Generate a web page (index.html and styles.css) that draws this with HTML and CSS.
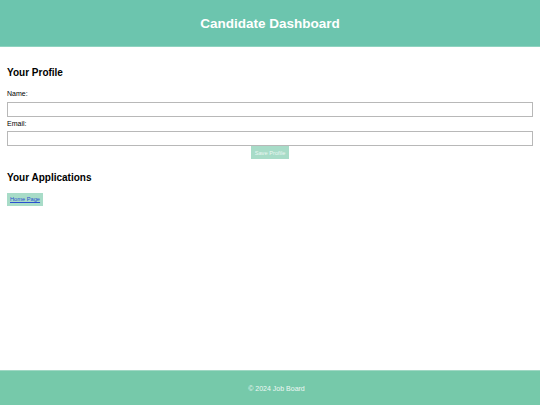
FILE: index.html
```html
<!DOCTYPE html>
<html>
<head>
<meta charset="utf-8">
<link rel="stylesheet" href="styles.css">
</head>
<body>
<header class="top">
  <h1 class="title">Candidate Dashboard</h1>
</header>
<main class="content">
  <section class="profile">
    <h2 class="section-title">Your Profile</h2>
    <form class="form">
      <label class="label">Name:</label>
      <input class="field" type="text">
      <label class="label">Email:</label>
      <input class="field" type="email">
      <button class="save" type="button">Save Profile</button>
    </form>
  </section>
  <section class="apps">
    <h2 class="section-title">Your Applications</h2>
    <div class="links">
      <a class="home" href="#">Home Page</a>
    </div>
  </section>
</main>
<footer class="bottom">
  <p class="copy">© 2024 Job Board</p>
</footer>
</body>
</html>
```

FILE: styles.css
```css
html, body {
  margin: 0;
  padding: 0;
  height: 100%;
}
body {
  font-family: "Liberation Sans", Arial, sans-serif;
  display: flex;
  flex-direction: column;
  background: #fff;
  color: #000;
}
.top {
  background: #6cc5ae;
  height: 46px;
  border-bottom: 1px solid #8fd3c0;
  display: flex;
  align-items: center;
  justify-content: center;
}
.title {
  margin: 0;
  color: #fff;
  font-size: 13.5px;
  font-weight: bold;
}
.content {
  flex: 1;
  padding: 20px 7px 0 7px;
}
.section-title {
  margin: 0;
  font-size: 10px;
  line-height: 12px;
  font-weight: bold;
}
.form {
  display: flex;
  flex-direction: column;
  margin-top: 10px;
}
.label {
  font-size: 7px;
  line-height: 10px;
  margin-bottom: 2.5px;
}
.field {
  box-sizing: border-box;
  height: 15px;
  width: 100%;
  margin: 0;
  border: 1px solid #b8b8b8;
  padding: 0;
  font-size: 7px;
}
.field + .label {
  margin-top: 2px;
}
.save {
  align-self: center;
  margin-top: 0;
  width: 38px;
  height: 13px;
  padding: 0;
  border: none;
  background: #a8dcc8;
  color: #eaf7f2;
  font-family: "Liberation Sans", Arial, sans-serif;
  font-size: 5.7px;
}
.apps {
  margin-top: 13px;
}
.links {
  margin-top: 9px;
  display: flex;
}
.home {
  display: inline-block;
  background: #a8dcc8;
  color: #2a4fcf;
  font-size: 5.7px;
  padding: 4px 3px;
  line-height: 5px;
}
.bottom {
  background: #76c9aa;
  height: 34px;
  border-top: 1px solid #a0d8c4;
  display: flex;
  align-items: center;
  justify-content: center;
  padding-left: 13px;
}
.copy {
  margin: 0;
  color: #eef8f4;
  font-size: 7px;
}
```
